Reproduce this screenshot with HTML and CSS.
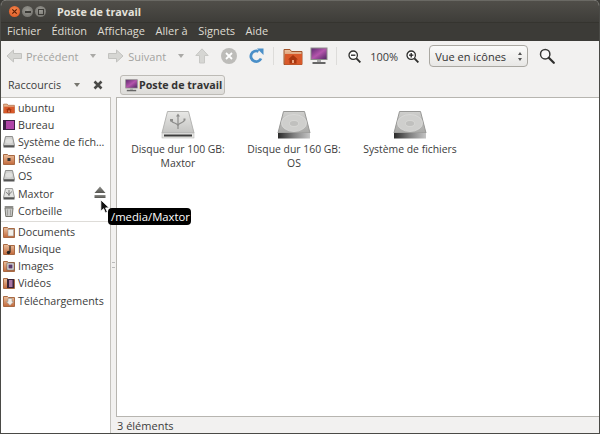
FILE: index.html
```html
<!DOCTYPE html>
<html lang="fr">
<head>
<meta charset="utf-8">
<title>Poste de travail</title>
<link rel="stylesheet" href="styles.css">
</head>
<body>
<svg class="defs" width="0" height="0" aria-hidden="true">
  <defs>
    <linearGradient id="screen" x1="0" y1="0" x2="1" y2="1"><stop offset="0" stop-color="#5a2a6e"/><stop offset=".5" stop-color="#b455ac"/><stop offset="1" stop-color="#4c2360"/></linearGradient>
    <linearGradient id="fold" x1="0" y1="0" x2="0" y2="1"><stop offset="0" stop-color="#ecc2a0"/><stop offset="1" stop-color="#c2683a"/></linearGradient>
    <linearGradient id="drive" x1="0" y1="0" x2="0" y2="1"><stop offset="0" stop-color="#e8e8e6"/><stop offset="1" stop-color="#c4c4c2"/></linearGradient>
    <linearGradient id="hdd" x1="0" y1="0" x2="0" y2="1"><stop offset="0" stop-color="#d0d0ce"/><stop offset="1" stop-color="#a8a8a6"/></linearGradient>
    <linearGradient id="slot" x1="0" y1="0" x2="1" y2="0"><stop offset="0" stop-color="#2a2a2a"/><stop offset=".5" stop-color="#808080"/><stop offset="1" stop-color="#c4c4c4"/></linearGradient>
    <linearGradient id="ejectfill" x1="0" y1="0" x2="0" y2="1"><stop offset="0" stop-color="#8e8e8a"/><stop offset="1" stop-color="#555551"/></linearGradient>
    <symbol id="usbdrive" viewBox="0 0 34 28">
      <path d="M6.500 .5h21l5.500 21.500H1z" fill="url(#drive)" stroke="#b4b4b2"/>
      <rect x="1" y="22" width="32" height="5" fill="#e6e6e4" stroke="#b0b0ae" stroke-width=".5"/>
      <rect x="3" y="23.500" width="28" height="2" fill="#3c3c3c"/>
      <path d="M17 4v14M10.500 9.500c0 3 6.500 2 6.500 5.500M23.500 9c0 3-6.500 2.500-6.500 6" fill="none" stroke="#8d8d8b" stroke-width="1.200"/>
      <path d="M17 2.500l-2 3h4zM9 8h3v2.500H9zM22.500 7.500h2v2h-2z" fill="#8d8d8b"/>
    </symbol>
    <symbol id="hdd-big" viewBox="0 0 34 28">
      <path d="M6.500 .5h21l5.500 21.500H1z" fill="url(#hdd)" stroke="#979795"/>
      <ellipse cx="17" cy="12" rx="12.500" ry="8.500" fill="#cfcfcd" stroke="#dddddb" stroke-width=".7"/>
      <ellipse cx="17" cy="12.500" rx="4.500" ry="3" fill="#c0c0be" stroke="#dcdcda" stroke-width=".7"/>
      <rect x="1" y="22" width="32" height="5.500" fill="url(#slot)"/>
    </symbol>
    <symbol id="computer" viewBox="0 0 18 18">
      <rect x="1" y="1" width="16" height="11.500" fill="url(#screen)" stroke="#8c8c8a"/>
      <rect x="7" y="13" width="4" height="2" fill="#aaa"/>
      <rect x="2.500" y="15" width="13" height="2" fill="#666"/>
    </symbol>
    <symbol id="homefolder" viewBox="0 0 20 18">
      <path d="M1 2.500h6l1.500 2H19v13H1z" fill="url(#fold)" stroke="#a2542a"/>
      <path d="M2 7h17v10.500H2z" fill="#d9592a"/>
      <path d="M10 8l5 4.500h-1.500v4h-7v-4H5z" fill="#a8360f"/>
      <rect x="9" y="13" width="2" height="3" fill="#e9a27e"/>
    </symbol>
    <symbol id="folder" viewBox="0 0 12 12">
      <path d="M.5 1.500h4l1 1h6v9H.5z" fill="url(#fold)" stroke="#a86a44"/>
    </symbol>
    <symbol id="disk" viewBox="0 0 12 12">
      <path d="M2.500 .5h7l2 9h-11z" fill="#cfcfcd" stroke="#8f8f8d"/>
      <ellipse cx="6" cy="5" rx="3.500" ry="2.500" fill="#dfdfdd"/>
      <rect x=".5" y="9.500" width="11" height="2" fill="#555"/>
    </symbol>
    <symbol id="usb" viewBox="0 0 12 12">
      <path d="M2.500 .5h7l2 9h-11z" fill="#e2e2e0" stroke="#9d9d9b"/>
      <path d="M6 2v6M3.500 4c0 2 2.500 1.500 2.500 3M8.500 3.500c0 2-2.500 1.500-2.500 3" fill="none" stroke="#666" stroke-width=".8"/>
      <rect x=".5" y="9.500" width="11" height="2" fill="#555"/>
    </symbol>
    <symbol id="trash" viewBox="0 0 12 12">
      <path d="M2 3h8l-.8 8.500H2.800z" fill="#c9c9c7" stroke="#77776f"/>
      <rect x="1.500" y="1" width="9" height="2" rx="1" fill="#8c8c88"/>
      <path d="M4.500 4.500v6M7.500 4.500v6" stroke="#8e8e8a" stroke-width=".7"/>
    </symbol>
    <symbol id="searchglass" viewBox="0 0 16 16">
      <circle cx="6.200" cy="6.200" r="4.700" fill="#fff" fill-opacity=".6" stroke="#3a3a38" stroke-width="1.500"/>
      <path d="M9.800 9.800l5 5" stroke="#2e2e2c" stroke-width="2.200" stroke-linecap="round"/>
    </symbol>
  </defs>
</svg>
<div class="window">
  <header class="titlebar">
    <div class="controls">
      <span class="ctl ctl-close">
        <svg viewBox="0 0 8 8" width="7" height="7"><path d="M1.500 1.500l5 5M6.500 1.500l-5 5" stroke="#5c1d05" stroke-width="1.400"/></svg>
      </span>
      <span class="ctl"><span class="ctl-min"></span></span>
      <span class="ctl"><span class="ctl-max"></span></span>
    </div>
    <span class="title">Poste de travail</span>
  </header>
  <nav class="menubar">
    <span>Fichier</span><span>Édition</span><span>Affichage</span><span>Aller à</span><span>Signets</span><span>Aide</span>
  </nav>
  <div class="toolbar">
    <span class="tool tool-back">
      <svg viewBox="0 0 16 14" width="16" height="14"><path d="M7.500 1L1 7l6.500 6V9.500h8v-5h-8z" fill="#d6d6d3" stroke="#c2c2bf"/></svg>
      <span class="muted">Précédent</span>
    </span>
    <span class="caret caret-back"></span>
    <span class="tool tool-forward">
      <svg viewBox="0 0 16 14" width="16" height="14"><path d="M8.500 1L15 7l-6.500 6V9.500h-8v-5h8z" fill="#d6d6d3" stroke="#c2c2bf"/></svg>
      <span class="muted">Suivant</span>
    </span>
    <span class="caret caret-forward"></span>
    <svg class="ic-up" viewBox="0 0 14 16" width="14" height="16"><path d="M7 .8L13.200 7.500H9.500v7.500h-5V7.500H.8z" fill="#d6d6d3" stroke="#c8c8c5"/></svg>
    <span class="stop"><svg viewBox="0 0 8 8" width="8" height="8"><path d="M1 1l6 6M7 1L1 7" stroke="#fff" stroke-width="1.800"/></svg></span>
    <svg class="ic-reload" viewBox="0 0 16 16" width="16" height="16"><path d="M13 10.500A5.300 5.300 0 1 1 10.500 3.500" fill="none" stroke="#4a8fc8" stroke-width="2.800"/><path d="M9 .5h6.500V7z" fill="#4a8fc8"/></svg>
    <span class="vsep vsep-a"></span>
    <svg class="ic-home" width="20" height="18"><use href="#homefolder"/></svg>
    <svg class="ic-comp" width="18" height="18"><use href="#computer"/></svg>
    <span class="vsep vsep-b"></span>
    <svg class="ic-zoomout" viewBox="0 0 13 13" width="13" height="13"><circle cx="5.200" cy="5.200" r="4.200" fill="#fff" stroke="#2e2e2c" stroke-width="1.300"/><path d="M3 5.200h4.400" stroke="#222" stroke-width="1.300"/><path d="M8.400 8.400l4 4" stroke="#2e2e2c" stroke-width="1.900"/></svg>
    <span class="zoomval">100%</span>
    <svg class="ic-zoomin" viewBox="0 0 13 13" width="13" height="13"><circle cx="5.200" cy="5.200" r="4.200" fill="#fff" stroke="#2e2e2c" stroke-width="1.300"/><path d="M3 5.200h4.400M5.200 3v4.400" stroke="#222" stroke-width="1.300"/><path d="M8.400 8.400l4 4" stroke="#2e2e2c" stroke-width="1.900"/></svg>
    <span class="select">
      <span>Vue en icônes</span>
      <span class="arrows"><i class="up"></i><i class="down"></i></span>
    </span>
    <svg class="ic-search" width="16" height="16"><use href="#searchglass"/></svg>
  </div>
  <div class="locbar">
    <div class="loc-side">
      <span class="loc-label">Raccourcis</span>
      <span class="caret caret-loc"></span>
      <svg class="ic-x" viewBox="0 0 10 10" width="10" height="10"><path d="M1.500 1.500l7 7M8.500 1.500l-7 7" stroke="#4a4a48" stroke-width="2.600"/></svg>
    </div>
    <span class="crumb">
      <svg width="13" height="13"><use href="#computer"/></svg>
      <span>Poste de travail</span>
    </span>
  </div>
  <div class="panes">
    <aside class="sidebar">
      <ul class="places">
        <li><svg width="12" height="12"><use href="#homefolder"/></svg>ubuntu</li>
        <li><svg viewBox="0 0 12 12" width="12" height="12"><rect x=".5" y="1.500" width="11" height="9" fill="#b044a8" stroke="#3e2046"/><rect x=".5" y="1.500" width="2.500" height="9" fill="#3e2046"/></svg>Bureau</li>
        <li><svg width="12" height="12"><use href="#disk"/></svg>Système de fich…</li>
        <li><svg viewBox="0 0 12 12" width="12" height="12"><use href="#folder" width="12" height="12"/><rect x="4.500" y="5" width="3" height="3" fill="#333"/></svg>Réseau</li>
        <li><svg width="12" height="12"><use href="#disk"/></svg>OS</li>
        <li class="has-eject"><svg width="12" height="12"><use href="#usb"/></svg>Maxtor
          <svg class="eject" viewBox="0 0 12 13" width="12" height="13"><path d="M6 .5L11.500 7h-11z" fill="url(#ejectfill)"/><rect x=".5" y="9" width="11" height="3" fill="url(#ejectfill)"/></svg>
        </li>
        <li><svg width="12" height="12"><use href="#trash"/></svg>Corbeille</li>
      </ul>
      <hr class="side-sep">
      <ul class="places">
        <li><svg viewBox="0 0 12 12" width="12" height="12"><use href="#folder" width="12" height="12"/><rect x="5" y="3.500" width="5.500" height="6.500" fill="#f1efe9" stroke="#888" stroke-width=".5"/></svg>Documents</li>
        <li><svg viewBox="0 0 12 12" width="12" height="12"><use href="#folder" width="12" height="12"/><path d="M7 3v6.500" stroke="#222" stroke-width="1.200"/><circle cx="5.500" cy="9.500" r="1.700" fill="#222"/></svg>Musique</li>
        <li><svg viewBox="0 0 12 12" width="12" height="12"><use href="#folder" width="12" height="12"/><rect x="4" y="3" width="7" height="7" fill="#e8e8e6" stroke="#555" stroke-width=".6"/><rect x="5.500" y="4.500" width="4" height="4" fill="#5a3a6a"/></svg>Images</li>
        <li><svg viewBox="0 0 12 12" width="12" height="12"><use href="#folder" width="12" height="12"/><rect x="4" y="2" width="7" height="9" fill="#3a2438"/><rect x="6" y="3" width="3.500" height="7" fill="#a775a4"/></svg>Vidéos</li>
        <li><svg viewBox="0 0 12 12" width="12" height="12"><use href="#folder" width="12" height="12"/><path d="M5 3.500h4v3h1.800L7 10.500 3.200 6.500H5z" fill="#f0ece6" stroke="#8a8a86" stroke-width=".5"/></svg>Téléchargements</li>
      </ul>
    </aside>
    <div class="handle"><i></i></div>
    <main class="content">
      <div class="icons">
        <figure class="item"><svg width="34" height="28"><use href="#usbdrive"/></svg><figcaption>Disque dur 100 GB: Maxtor</figcaption></figure>
        <figure class="item"><svg width="34" height="28"><use href="#hdd-big"/></svg><figcaption>Disque dur 160 GB: OS</figcaption></figure>
        <figure class="item"><svg width="34" height="28"><use href="#hdd-big"/></svg><figcaption>Système de fichiers</figcaption></figure>
      </div>
      <div class="status">3 éléments</div>
    </main>
  </div>
  <svg class="cursor" viewBox="0 0 10 15" width="10" height="15"><path d="M.8.800v11.500l2.800-2.600 1.800 4.200 2-.9-1.800-4.100h3.700z" fill="#111" stroke="#fff" stroke-width=".9"/></svg>
  <div class="tooltip">/media/Maxtor</div>
</div>
</body>
</html>
```
FILE: styles.css
```css
* { box-sizing: border-box; }
html, body { margin: 0; padding: 0; }
body { width: 600px; height: 434px; overflow: hidden; background: #3c3b37; font-family: "Open Sans", "Noto Sans", sans-serif; font-size: 11px; color: #3c3c3c; }
.defs { position: absolute; }
.window { position: relative; width: 600px; height: 434px; display: flex; flex-direction: column; background: #f2f1f0; border: 1px solid #4a4a46; border-top: 0; border-radius: 6px 6px 0 0; overflow: hidden; }
svg { display: block; flex: none; }

.titlebar { height: 22px; flex: none; display: flex; align-items: center; padding-left: 8px; background: linear-gradient(#504e49, #3e3d39); border-top: 1px solid #6a6964; }
.controls { display: flex; gap: 2px; width: 48px; }
.ctl { width: 11px; height: 11px; border-radius: 50%; background: radial-gradient(circle at 50% 40%, #9b9a94, #6b6a65); display: flex; align-items: center; justify-content: center; }
.ctl-close { background: radial-gradient(circle at 50% 40%, #f48a50, #d9501c); }
.ctl-min { width: 6px; height: 2px; background: #3c3b37; }
.ctl-max { width: 6px; height: 6px; border: 1px solid #3c3b37; }
.title { font-weight: 700; font-size: 10.800px; color: #e4e2dc; }

.menubar { height: 19px; flex: none; display: flex; gap: 10.500px; align-items: center; padding: 0 0 3px 6px; background: #3c3b37; color: #dfdbd2; font-size: 11px; border-top: 1px solid #35342f; }

.toolbar { height: 30px; flex: none; display: flex; align-items: center; padding-left: 5px; }
.tool { display: flex; align-items: center; gap: 4px; }
.muted { color: #a3a3a0; }
.caret { width: 0; height: 0; border: 3.500px solid transparent; border-top: 4px solid #aaa9a6; border-bottom: 0; }
.caret-back { margin-left: 12px; }
.caret-forward { margin-left: 12px; }
.tool-forward { margin-left: 12px; }
.ic-up { margin-left: 11px; }
.stop { width: 16px; height: 16px; margin-left: 12px; border-radius: 50%; background: #bdbcb9; display: flex; align-items: center; justify-content: center; }
.ic-reload { margin-left: 11px; }
.vsep { width: 1px; height: 18px; background: #dddcda; }
.vsep-a { margin-left: 9px; }
.ic-home { margin-left: 9px; }
.ic-comp { margin-left: 7px; }
.vsep-b { margin-left: 8px; }
.ic-zoomout { margin-left: 11px; }
.zoomval { margin-left: 9px; width: 27px; }
.ic-zoomin { margin-left: 9px; }
.select { margin-left: 10px; width: 99px; height: 22px; padding: 0 5px; display: flex; align-items: center; justify-content: space-between; border: 1px solid #aaa8a2; border-radius: 4px; background: linear-gradient(#fbfbfa, #e8e7e5); font-size: 11px; color: #333; }
.arrows { display: flex; flex-direction: column; gap: 3px; }
.arrows i { display: block; width: 0; height: 0; border: 2.500px solid transparent; }
.arrows .up { border-bottom: 3px solid #555; border-top: 0; }
.arrows .down { border-top: 3px solid #555; border-bottom: 0; }
.ic-search { margin-left: 11px; }

.locbar { height: 26px; flex: none; display: flex; align-items: center; padding-top: 2px; }
.loc-side { width: 119px; display: flex; align-items: center; padding-left: 7px; }
.loc-label { color: #3c3c3c; font-size: 10.700px; }
.caret-loc { margin-left: 13px; border-top-color: #77766f; }
.ic-x { margin-left: 13px; }
.crumb { height: 20px; width: 105px; display: flex; align-items: center; gap: 1px; padding-left: 4px; font-weight: 700; font-size: 10.700px; color: #333; border: 1px solid #bdbbb6; border-radius: 3px; background: linear-gradient(#eeedeb, #dddcd9); white-space: nowrap; }

.panes { flex: 1; min-height: 0; display: flex; }
.sidebar { width: 110px; flex: none; padding-top: 1px; background: #fff; border-top: 1px solid #c4c2bd; border-right: 1px solid #c4c2bd; font-size: 10.700px; }
.places { list-style: none; margin: 0; padding: 0; }
.places li { position: relative; height: 17.200px; display: flex; align-items: center; gap: 3px; padding-left: 2px; white-space: nowrap; color: #3c3c3c; }
.eject { position: absolute; left: 93px; top: 1px; }
.side-sep { margin: 2px 0 1px; border: 0; border-top: 1px solid #dedcd8; }
.handle { width: 5px; flex: none; display: flex; align-items: center; justify-content: center; }
.handle i { display: block; width: 3px; height: 6px; border-top: 1px solid #bbb; border-bottom: 1px solid #bbb; }
.content { flex: 1; min-width: 0; display: flex; flex-direction: column; }
.icons { flex: 1; display: flex; align-items: flex-start; padding: 13px 0 0 3px; background: #fff; border: 1px solid #b7b5b0; border-right: 0; }
.item { width: 116px; margin: 0; display: flex; flex-direction: column; align-items: center; gap: 3px; text-align: center; line-height: 14px; color: #3c3c3c; font-size: 10.400px; }
.item figcaption { width: 100px; }
.status { height: 16px; flex: none; display: flex; align-items: center; padding-left: 1px; color: #3c3c3c; }

.tooltip { position: absolute; left: 107px; top: 208px; width: 83px; height: 17px; padding: 0 3px; display: flex; align-items: center; background: #000; color: #fff; border-radius: 4px; font-size: 11.300px; white-space: nowrap; }
.cursor { position: absolute; left: 99px; top: 199px; z-index: 2; }
```
